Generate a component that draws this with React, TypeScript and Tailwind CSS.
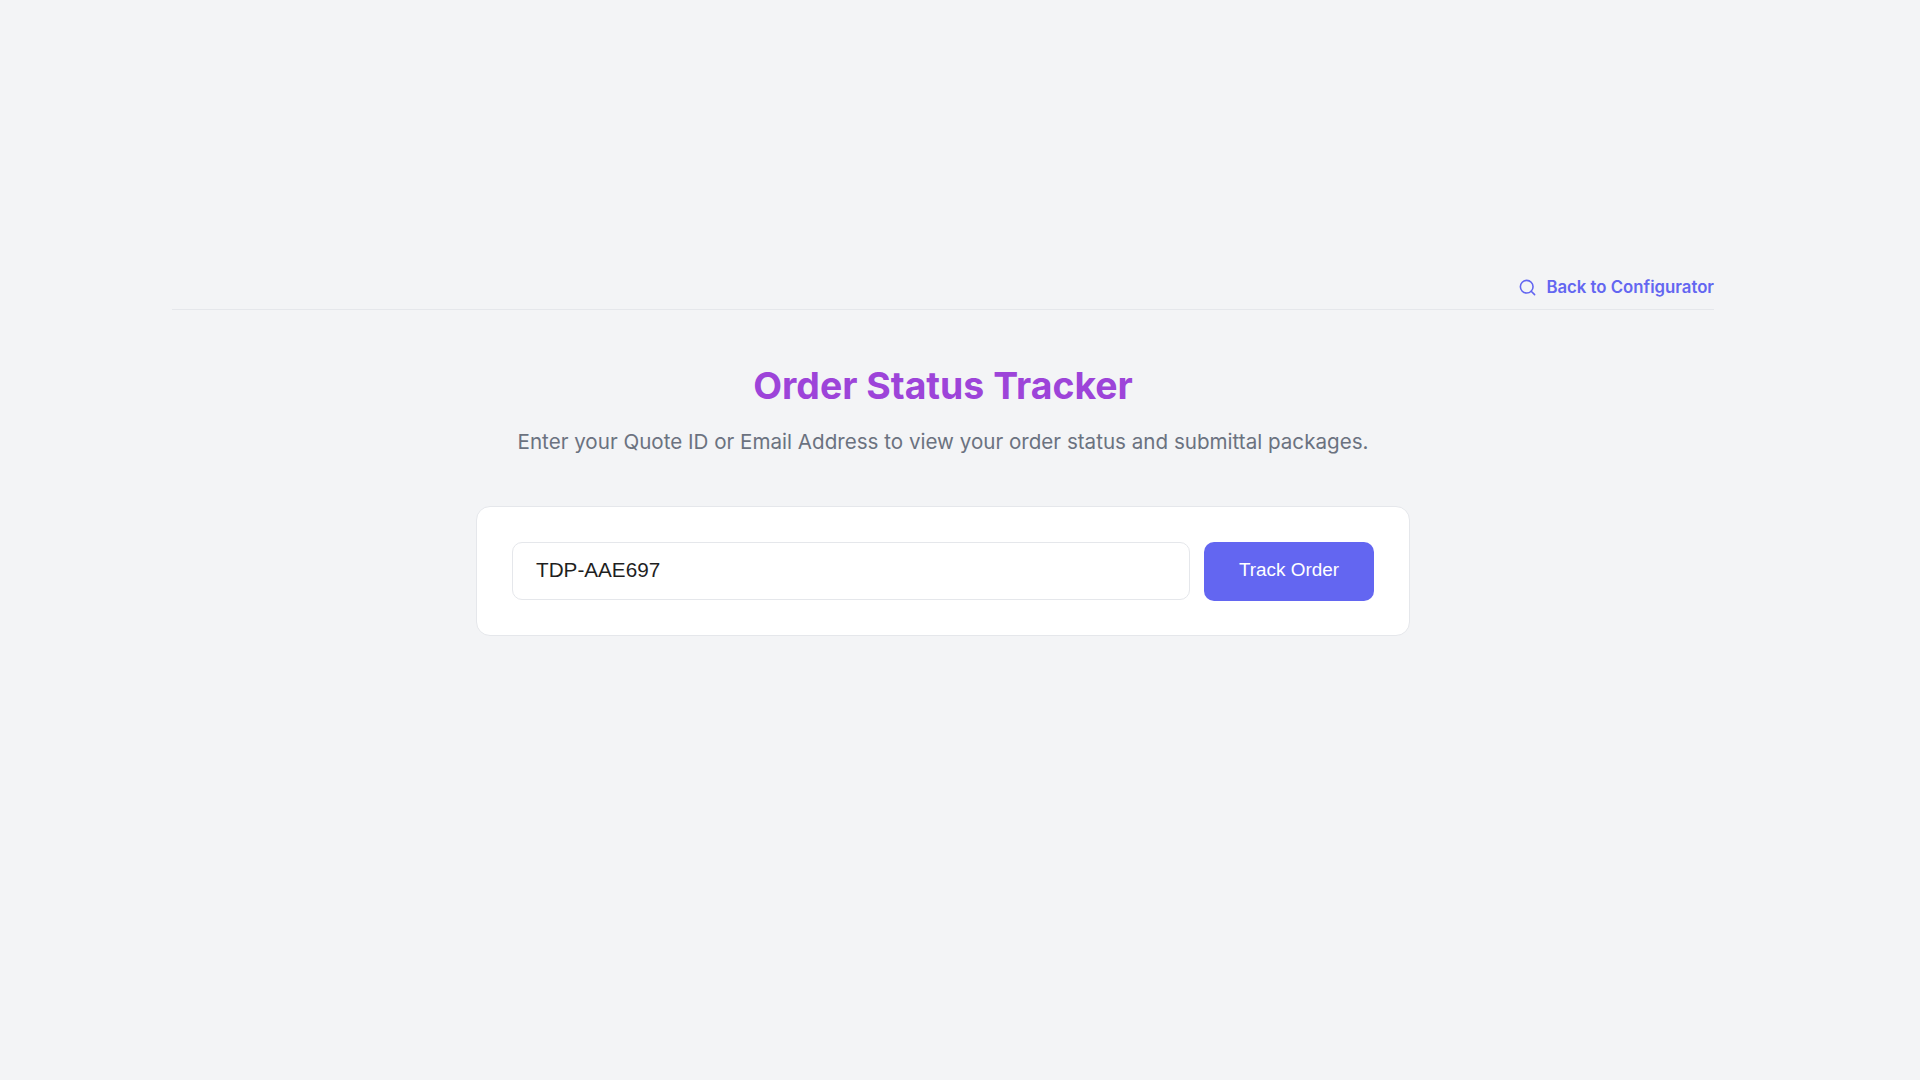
import { Search } from "lucide-react";

export default function App() {
  return (
    <div className="min-h-screen bg-[#f3f4f6] pl-[172px] pr-[206px] pt-[272px] font-['Inter',sans-serif]">
      <div className="flex h-[38px] items-start justify-end border-b border-[#e5e7eb]">
        <a className="flex h-[30px] items-center gap-[9px] text-[16.75px] font-semibold text-[#6366f1]">
          <Search className="h-[19px] w-[19px]" strokeWidth={2} />
          <span className="pt-[1px]">Back to Configurator</span>
        </a>
      </div>
      <div className="mt-[54px] text-center">
        <h1 className="text-[37.4px] leading-[44px] font-bold text-[#9d44d9]">Order Status Tracker</h1>
        <p className="mt-[19px] text-[20.6px] leading-[30px] text-[#6b7280]">
          Enter your Quote ID or Email Address to view your order status and submittal packages.
        </p>
      </div>
      <div className="mx-auto mt-[49px] flex w-[934px] items-center gap-[14px] rounded-[14px] border border-[#e5e7eb] bg-white px-[35px] py-[34.5px]">
        <div className="flex h-[58px] flex-1 items-center rounded-[10px] border border-[#e5e7eb] bg-white pb-[3px] pl-[23px] font-['Liberation_Sans',sans-serif] text-[20.7px] text-[#1f1f1f]">
          TDP-AAE697
        </div>
        <button className="h-[59px] w-[170px] rounded-[10px] bg-[#6366f1] pb-[1px] font-['Liberation_Sans',sans-serif] text-[18.9px] text-white">
          Track Order
        </button>
      </div>
    </div>
  );
}
